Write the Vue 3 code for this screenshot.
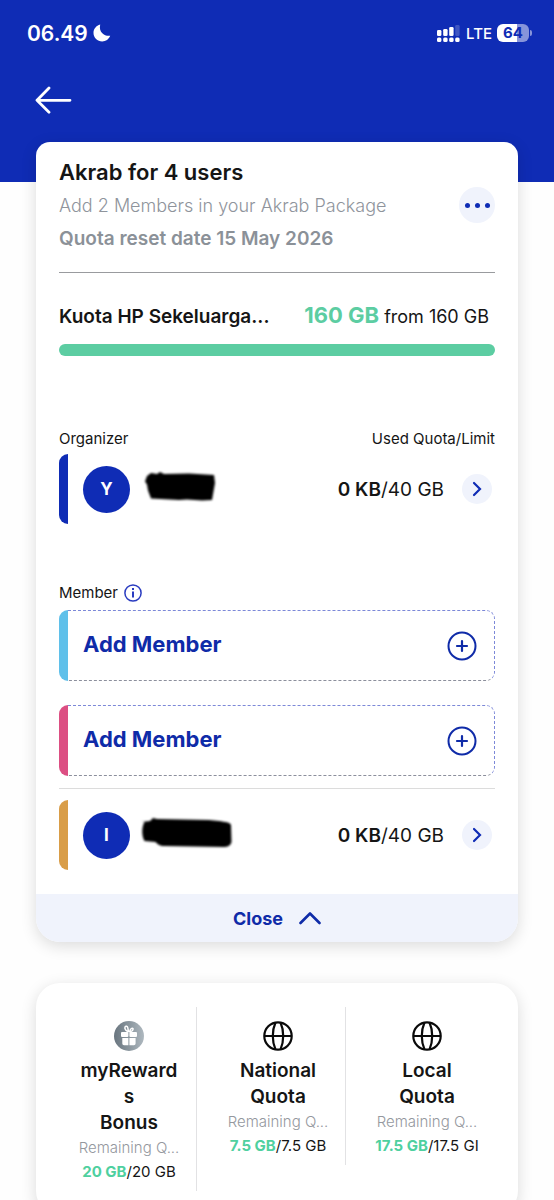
<script setup>
const slots = [
  { id: 'slot-1', tone: 'sky' },
  { id: 'slot-2', tone: 'rose' },
]

const quotas = [
  { id: 'rewards', icon: 'gift', title: ['myReward', 's', 'Bonus'], left: '20 GB', total: '/20 GB' },
  { id: 'national', icon: 'globe', title: ['National', 'Quota'], left: '7.5 GB', total: '/7.5 GB' },
  { id: 'local', icon: 'globe', title: ['Local', 'Quota'], left: '17.5 GB', total: '/17.5 GI' },
]
</script>

<template>
  <div class="screen">
    <header class="top">
      <div class="status">
        <span class="time">06.49</span>
        <svg class="moon" width="18" height="18" viewBox="0 0 18 18" aria-hidden="true">
          <path d="M7.200 .5C3.200 1.600 .5 5 .5 8.900c0 4.700 3.900 8.500 8.700 8.500 3.600 0 6.700-2.200 8-5.700C12.500 12.600 5.200 9 7.200 .5z" fill="#fff" />
        </svg>
        <svg class="signal" width="24" height="19" viewBox="0 0 24 19" aria-hidden="true">
          <g fill="#fff">
            <rect x="0" y="6" width="4.400" height="6" rx="1.300" />
            <rect x="6.200" y="5" width="4.400" height="7" rx="1.300" />
            <rect x="12.200" y="3" width="4.400" height="9" rx="1.300" />
            <rect x="18.200" y="1" width="4.400" height="11" rx="1.300" opacity=".2" />
            <rect x="0" y="13.500" width="4.400" height="4.500" rx="1.500" />
            <rect x="6.200" y="13.500" width="4.400" height="4.500" rx="1.500" />
            <rect x="12.200" y="13.500" width="4.400" height="4.500" rx="1.500" />
            <rect x="18.200" y="13.500" width="4.400" height="4.500" rx="1.500" />
          </g>
        </svg>
        <span class="network">LTE</span>
        <span class="battery"><span class="level">64</span></span>
      </div>
      <button class="back" type="button" aria-label="Back">
        <svg width="38" height="28" viewBox="0 0 38 28" fill="none" stroke="#fff" stroke-width="2.800" stroke-linecap="round" stroke-linejoin="round">
          <path d="M14 2L2 14.300l12 12M2 14.300h33" />
        </svg>
      </button>
    </header>

    <main>
      <section class="card plan">
        <div class="inner">
          <div class="heading">
            <div>
              <h1>Akrab for 4 users</h1>
              <p class="hint">Add 2 Members in your Akrab Package</p>
              <p class="reset">Quota reset date 15 May 2026</p>
            </div>
            <button class="more" type="button" aria-label="More options"><i></i><i></i><i></i></button>
          </div>
          <hr class="rule strong" />

          <div class="usage">
            <h2>Kuota HP Sekeluarga...</h2>
            <p><b>160 GB</b> from 160 GB</p>
          </div>
          <div class="bar" role="progressbar" aria-label="Remaining quota" aria-valuenow="160" aria-valuemax="160"></div>

          <div class="labels"><span>Organizer</span><span>Used Quota/Limit</span></div>
          <div class="row navy">
            <span class="stripe"></span>
            <div class="person">
              <span class="avatar">Y</span>
              <svg class="scribble" width="96" height="48" viewBox="0 4 96 48" aria-hidden="true">
                <path d="M7 15l4-3 6 1 3-2 4 2 25-.5 25 1.500 1 8-3 17-10 .5-15-1-8 .5-28-1.500-3-8-1-6-2-3z" fill="#000" />
              </svg>
              <p class="amount"><b>0 KB</b>/40 GB</p>
              <button class="go" type="button" aria-label="Open organizer">
                <svg width="10" height="16" viewBox="0 0 10 16" fill="none" stroke="#0f2cb5" stroke-width="2.200" stroke-linecap="round"><path d="M2 2l6 6-6 6" /></svg>
              </button>
            </div>
          </div>

          <div class="labels members">
            <span>Member</span>
            <button class="info" type="button" aria-label="About members">
              <svg width="18" height="18" viewBox="0 0 18 18" fill="none" stroke="#2a3cc0" stroke-width="1.500"><circle cx="9" cy="9" r="8.100" /><path d="M9 7.500v6M9 4v2" stroke-width="2" /></svg>
            </button>
          </div>

          <button v-for="slot in slots" :key="slot.id" class="row add" :class="slot.tone" type="button">
            <span class="stripe"></span>
            <span class="body">
              <span class="text">Add Member</span>
              <svg width="30" height="30" viewBox="0 0 30 30" fill="none" stroke="#0f2ba8" stroke-width="2"><circle cx="15" cy="15" r="13.500" /><path d="M15 10v10M10 15h10" stroke-linecap="round" stroke-width="2.200" /></svg>
            </span>
          </button>

          <hr class="rule" />
          <div class="row amber">
            <span class="stripe"></span>
            <div class="person">
              <span class="avatar">I</span>
              <svg class="scribble" width="96" height="48" viewBox="1 -2 96 48" aria-hidden="true">
                <path d="M2 9l9-1 3-3 4 1 52 1 10 1c6 1 11 1 12 4l.5 17c-1 4-4 5-8 5l-59-1c-5 0-7-2-9-4l-11-1c-3-5-3-14 0-19z" fill="#000" />
              </svg>
              <p class="amount"><b>0 KB</b>/40 GB</p>
              <button class="go" type="button" aria-label="Open member">
                <svg width="10" height="16" viewBox="0 0 10 16" fill="none" stroke="#0f2cb5" stroke-width="2.200" stroke-linecap="round"><path d="M2 2l6 6-6 6" /></svg>
              </button>
            </div>
          </div>
        </div>

        <button class="close" type="button">
          <span>Close</span>
          <svg width="22" height="14" viewBox="0 0 22 14" fill="none" stroke="#0f2ba8" stroke-width="2.600" stroke-linecap="round" stroke-linejoin="round"><path d="M1.500 12L11 2.500l9.500 9.500" /></svg>
        </button>
      </section>

      <section class="card quotas">
        <article v-for="quota in quotas" :key="quota.id">
          <svg v-if="quota.icon === 'gift'" width="30" height="30" viewBox="0 0 30 30" aria-hidden="true">
            <defs>
              <linearGradient id="silver" x1="0" y1="0" x2="1" y2="0">
                <stop offset="0" stop-color="#69757f" />
                <stop offset=".45" stop-color="#87939b" />
                <stop offset="1" stop-color="#aeb8bf" />
              </linearGradient>
            </defs>
            <circle cx="15" cy="15" r="15" fill="url(#silver)" />
            <g fill="#fff">
              <rect x="7" y="11" width="7.400" height="5" rx="1" />
              <rect x="15.400" y="11" width="7.600" height="5" rx="1" />
              <path d="M8.300 17h6.100v7.200H10q-1.700 0-1.700-1.700zM15.400 17h6.200v5.500q0 1.700-1.700 1.700h-4.500z" />
            </g>
            <g fill="none" stroke="#fff" stroke-width="1.500">
              <path d="M14.500 10.500c-2-.3-4.300-2.500-3.500-4.500.8-1.500 2.500-.8 2.800.8zM15.700 10.500c2 0 3.700-1 3.300-3-.8-1-2.500 0-3.300 3z" />
            </g>
          </svg>
          <svg v-else width="30" height="30" viewBox="0 0 30 30" fill="none" stroke="#0a0a0a" stroke-width="2.200" aria-hidden="true">
            <circle cx="15" cy="15" r="13.700" />
            <path d="M1.200 15h27.600M12.500 1.500c-3.600 8-3.600 19 0 27M17.500 1.500c3.600 8 3.600 19 0 27" />
          </svg>
          <h3><span v-for="line in quota.title" :key="line">{{ line }}</span></h3>
          <p class="caption">Remaining Q...</p>
          <p class="balance"><b>{{ quota.left }}</b>{{ quota.total }}</p>
        </article>
      </section>
    </main>
  </div>
</template>

<style>
body {
  margin: 0;
  background: #fff;
}
</style>

<style scoped>
.screen {
  height: 100vh;
  overflow: hidden;
  background: #fefefe;
  color: #151515;
  font-family: Inter, "Liberation Sans", sans-serif;
}

.screen * {
  box-sizing: border-box;
}

h1, h2, h3, p {
  margin: 0;
}

button {
  margin: 0;
  padding: 0;
  border: 0;
  background: none;
  color: inherit;
  font-family: inherit;
  cursor: pointer;
}

svg {
  display: block;
  flex: none;
}

.top {
  height: 182px;
  background: #0f2cb5;
  color: #fff;
}

.status {
  display: flex;
  align-items: center;
  height: 66px;
  padding: 0 24px 0 27px;
}

.time {
  font-size: 21px;
  font-weight: 600;
}

.moon {
  margin-left: 5px;
}

.signal {
  margin-left: auto;
}

.network {
  margin: 0 5px 0 5px;
  font-size: 15px;
  font-weight: 500;
}

.battery {
  position: relative;
  margin-right: 1px;
}

.battery::after {
  content: "";
  position: absolute;
  top: 6px;
  right: -3px;
  width: 2px;
  height: 6px;
  border-radius: 0 2px 2px 0;
  background: #8794da;
}

.level {
  display: block;
  width: 32px;
  border-radius: 6px;
  background: linear-gradient(90deg, #fff 64%, #8794da 64%);
  color: #0f2cb5;
  font-size: 15px;
  font-weight: 700;
  line-height: 18px;
  text-align: center;
}

.back {
  margin: 20px 0 0 35px;
}

.card {
  margin: 0 36px;
  border-radius: 24px;
  background: #fff;
  box-shadow: 0 4px 16px rgba(0, 0, 0, .14);
}

.plan {
  position: relative;
  margin-top: -40px;
  border-radius: 14px 14px 24px 24px;
  overflow: hidden;
}

.inner {
  padding: 14px 23px 24px;
}

.heading {
  display: flex;
  align-items: center;
  justify-content: space-between;
}

h1 {
  font-size: 22px;
  font-weight: 600;
  line-height: 32px;
}

.hint {
  color: #8f949c;
  font-size: 18px;
  font-weight: 300;
  line-height: 36px;
}

.reset {
  color: #8b9198;
  font-size: 19px;
  font-weight: 600;
  line-height: 30px;
}

.more {
  display: flex;
  align-items: center;
  justify-content: center;
  gap: 5px;
  width: 36px;
  height: 36px;
  border-radius: 50%;
  background: #f0f3fc;
}

.more i {
  width: 5px;
  height: 5px;
  border-radius: 50%;
  background: #0f2cb5;
}

.rule {
  height: 1px;
  margin: 12px 0 11px;
  border: 0;
  background: #dcdcdc;
}

.rule.strong {
  margin: 18px 0 25px;
  background: #999b9e;
}

.usage {
  display: flex;
  align-items: center;
  justify-content: space-between;
  padding-right: 6px;
  font-size: 18px;
  line-height: 35px;
  white-space: nowrap;
}

h2 {
  font-size: 19px;
  font-weight: 600;
}

.usage b {
  color: #5ccda2;
  font-size: 22px;
}

.bar {
  height: 12px;
  margin-top: 10px;
  border-radius: 6px;
  background: #5ccda2;
}

.labels {
  display: flex;
  align-items: center;
  justify-content: space-between;
  margin: 71px 0 3px;
  font-size: 15px;
  line-height: 24px;
}

.labels.members {
  justify-content: flex-start;
  gap: 6px;
  margin: 57px 0 5px;
}

.row {
  display: flex;
  width: 100%;
  min-height: 70px;
}

.stripe {
  flex: none;
  width: 9px;
  border-radius: 9px 0 0 9px;
}

.navy .stripe { background: #0f2cb5; }
.sky .stripe { background: #5fc0ea; }
.rose .stripe { background: #dc4f83; }
.amber .stripe { background: #d99d48; }

.person {
  display: flex;
  flex: 1;
  align-items: center;
  padding: 0 3px 0 15px;
}

.avatar {
  flex: none;
  width: 47px;
  border-radius: 50%;
  background: #0f2cb5;
  color: #fff;
  font-size: 17px;
  font-weight: 700;
  line-height: 47px;
  text-align: center;
}

.scribble {
  margin-left: 10px;
  filter: blur(1px);
}

.amount {
  margin-left: auto;
  font-size: 19px;
  white-space: nowrap;
}

.amount b {
  font-weight: 600;
}

.go {
  display: grid;
  place-items: center;
  width: 30px;
  height: 30px;
  margin-left: 18px;
  border-radius: 50%;
  background: #f0f3fc;
}

.add {
  min-height: 71px;
  text-align: left;
}

.add + .add {
  margin-top: 24px;
}

.body {
  display: flex;
  flex: 1;
  align-items: center;
  justify-content: space-between;
  padding: 0 17px 0 15px;
  border: 1px dashed #7c88d8;
  border-bottom-color: #8c8f9c;
  border-left: 0;
  border-radius: 0 9px 9px 0;
  color: #0f2ba8;
  font-size: 22px;
  font-weight: 700;
}

.text {
  padding-bottom: 4px;
}

.close {
  display: flex;
  align-items: center;
  justify-content: center;
  gap: 16px;
  width: 100%;
  height: 48px;
  background: #f0f3fc;
  color: #0f2ba8;
  font-size: 18px;
  font-weight: 700;
}

.quotas {
  display: grid;
  grid-template-columns: repeat(3, 1fr);
  align-items: start;
  margin-top: 41px;
  padding: 24px 23px 24px 12px;
}

article {
  display: flex;
  flex-direction: column;
  align-items: center;
  min-width: 0;
  padding: 14px 14px 7px 28px;
  border-right: 1px solid #e2e2e4;
  text-align: center;
  white-space: nowrap;
}

article:last-child {
  border-right-color: transparent;
}

h3 {
  margin-top: 7px;
  font-size: 19px;
  font-weight: 600;
  line-height: 26px;
}

h3 span {
  display: block;
}

.caption {
  color: #94989e;
  font-size: 15px;
  font-weight: 300;
  line-height: 24px;
}

.balance {
  font-size: 15px;
  line-height: 24px;
}

.balance b {
  color: #4fd09f;
}
</style>
